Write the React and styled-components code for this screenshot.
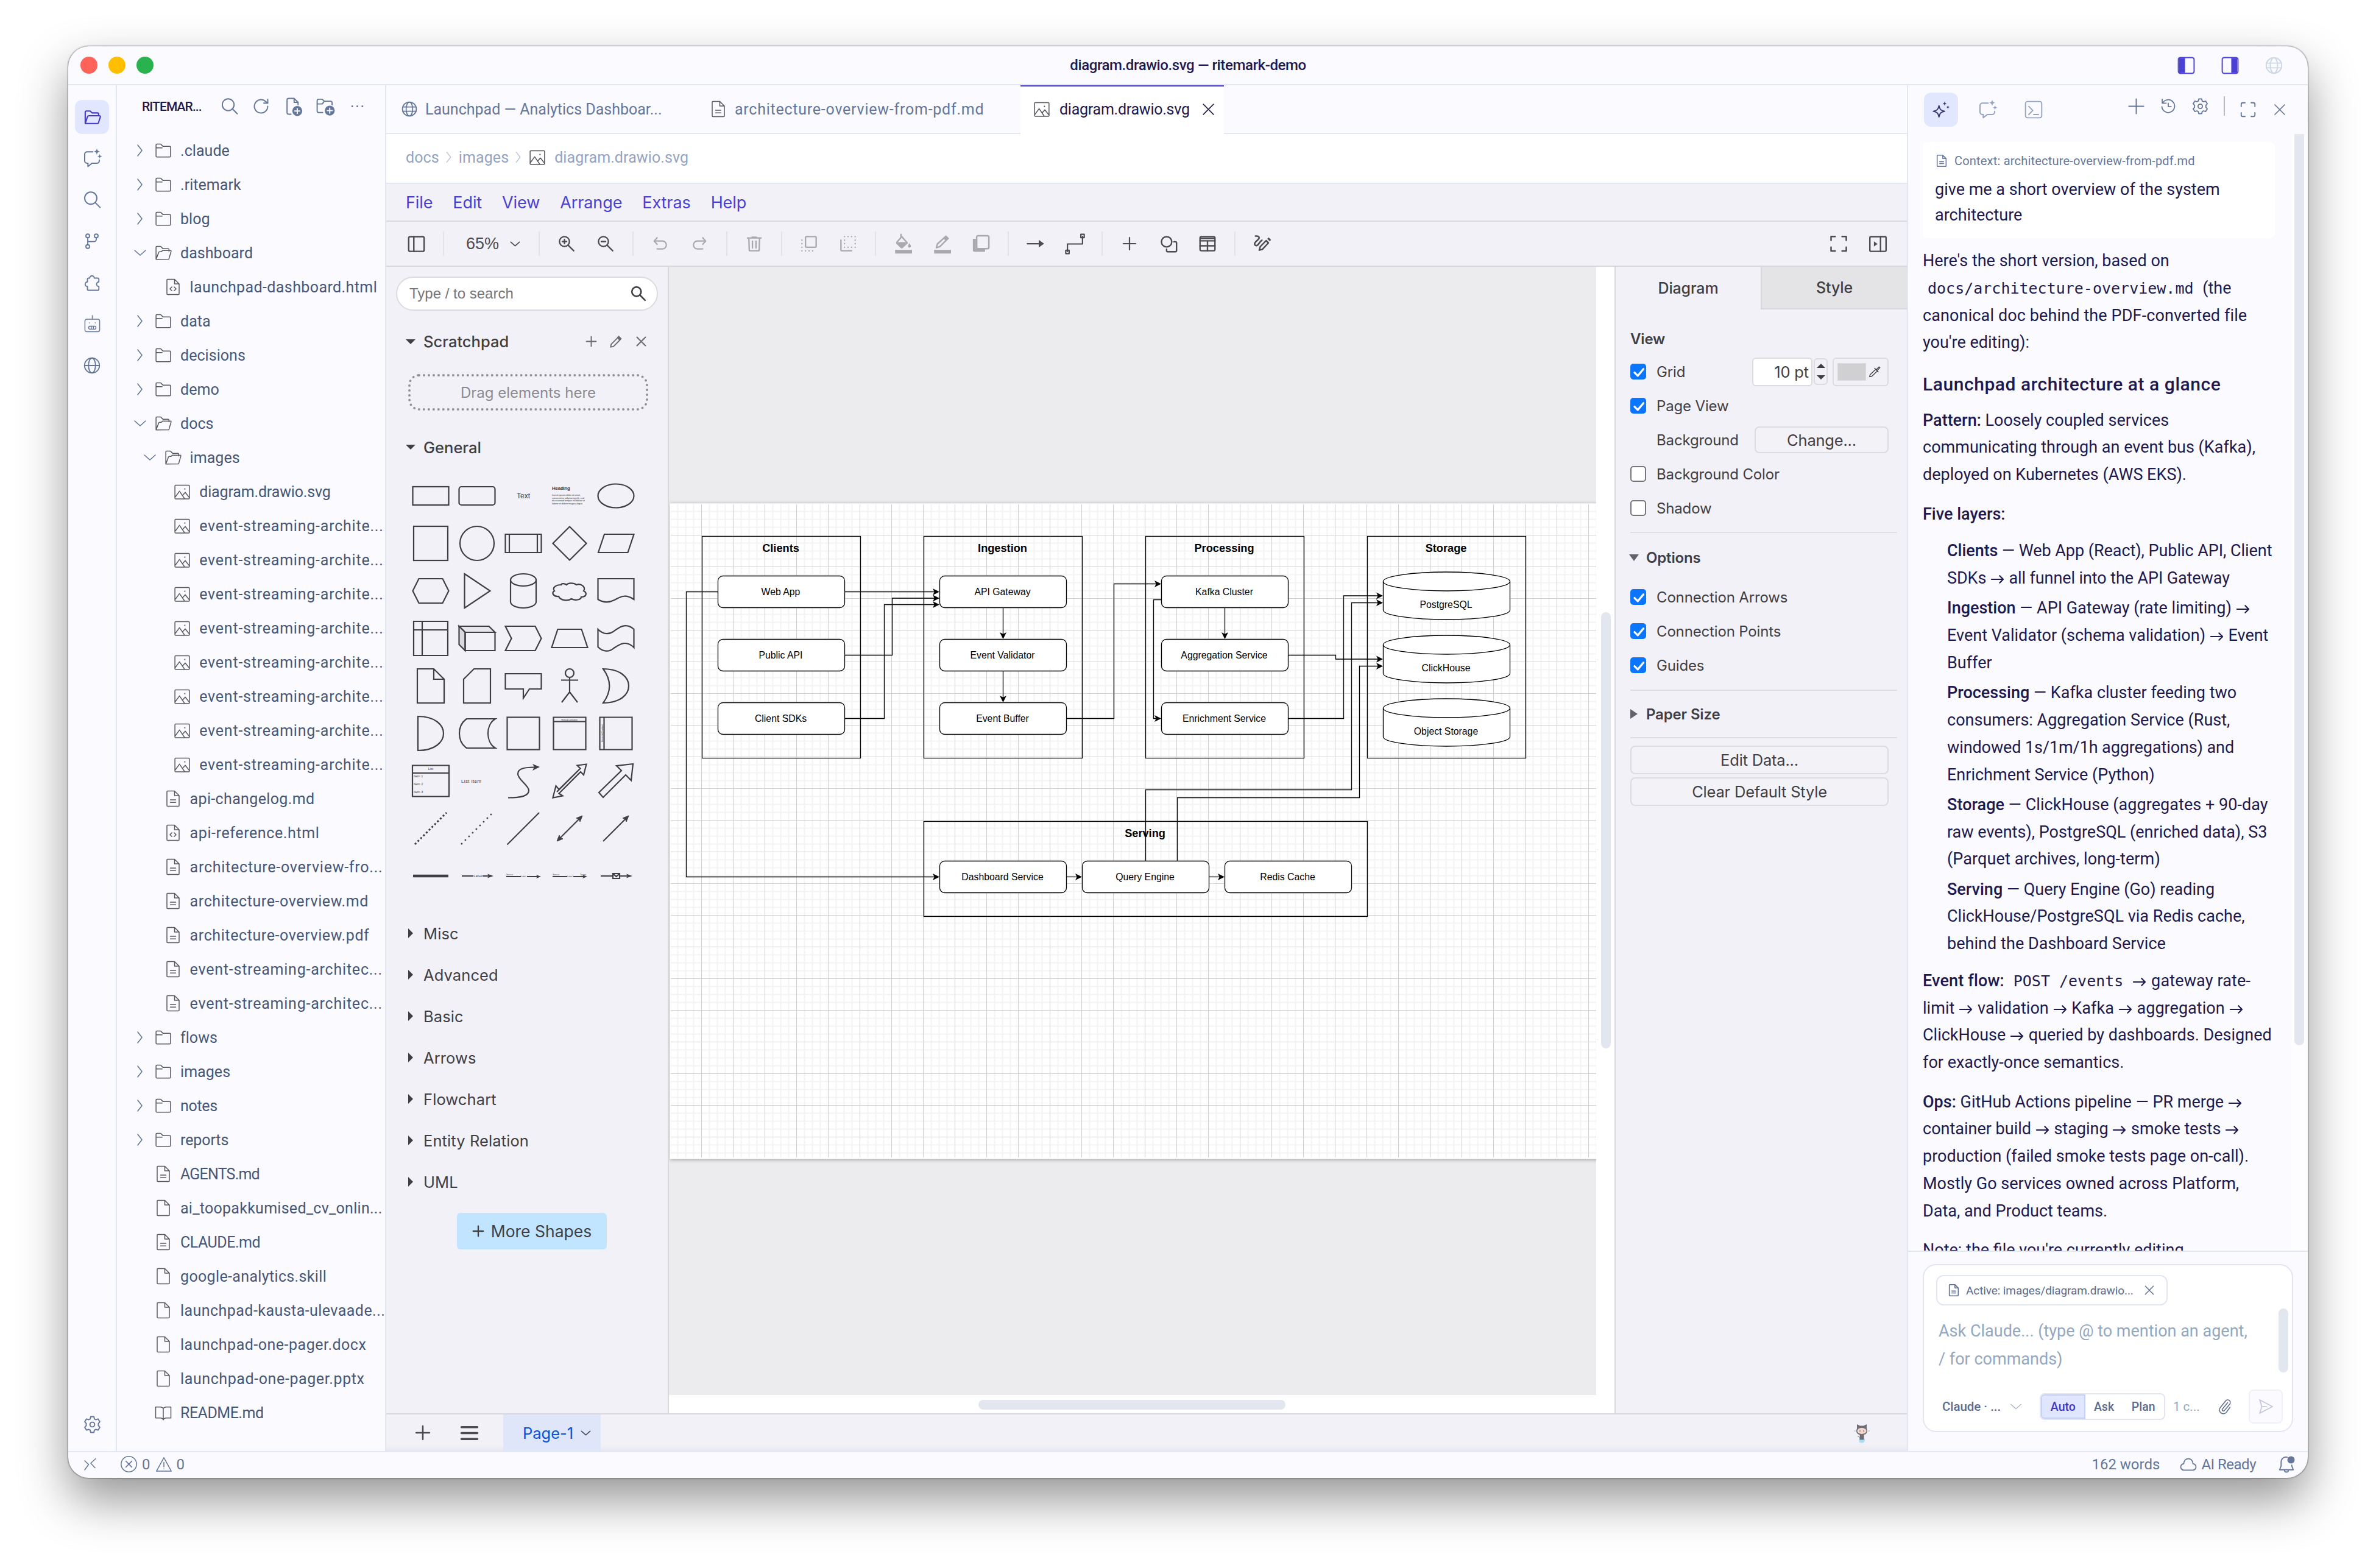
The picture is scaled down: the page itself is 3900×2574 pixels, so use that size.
import React from 'react';
import styled, { createGlobalStyle } from 'styled-components';

const Global = createGlobalStyle`
  * { box-sizing: border-box; }
  html, body { margin: 0; background: #fff; }
  body { font-family: Roboto, "Noto Sans", sans-serif; overflow: hidden; }
`;

/* ---------- icons ---------- */

const Svg = styled.svg`
  width: ${p => p.$s || 28}px;
  height: ${p => p.$s || 28}px;
  flex: none;
  display: block;
  fill: none;
  stroke: ${p => p.$c || 'currentColor'};
  stroke-width: ${p => p.$w || 1.5};
  stroke-linecap: round;
  stroke-linejoin: round;
  overflow: visible;
`;

const fill = { fill: 'currentColor', stroke: 'none' };
const SPARK = 'M0-3.4C.5-1 1-.5 3.4 0 1 .5.5 1 0 3.4-.5 1-1 .5-3.4 0-1-.5-.5-1 0-3.4z';

const glyphs = {
  folderOpen: <path d="M3 20V5.500A1.500 1.500 0 0 1 4.500 4h4.700l2.800 2.500h6.500A1.500 1.500 0 0 1 20 8v2M3 20l2.800-8.500A2 2 0 0 1 7.700 10H21a1.300 1.300 0 0 1 1.200 1.700L19.800 19a1.500 1.500 0 0 1-1.400 1z" />,
  chatSpark: <><path d="M13 4H6a3 3 0 0 0-3 3v8a3 3 0 0 0 3 3h1v4l5-4h6a3 3 0 0 0 3-3v-1" /><path d={SPARK} transform="translate(18 3.500) scale(1.150)" {...fill} /><path d={SPARK} transform="translate(21.500 9.500) scale(.85)" {...fill} /></>,
  search: <><circle cx="10.500" cy="10" r="7.500" /><path d="M16 15.500l6 6" /></>,
  branch: <><circle cx="6" cy="4.500" r="2.600" /><circle cx="18" cy="4.500" r="2.600" /><circle cx="6" cy="19.500" r="2.600" /><path d="M6 7v10M18 7v2.500a3 3 0 0 1-3 3H6" /></>,
  puzzle: <path d="M9 6a3 3 0 1 1 6 0h4.500a1.500 1.500 0 0 1 1.500 1.500V11a3 3 0 1 0 0 6v3.500a1.500 1.500 0 0 1-1.500 1.500h-12A1.500 1.500 0 0 1 6 20.500V17a3 3 0 1 1 0-6V7.500A1.500 1.500 0 0 1 7.500 6z" />,
  robot: <><rect x="2" y="5" width="20" height="17" rx="2.500" /><path d="M12 0v5M9 14.500h6a2 2 0 0 1 0 4H9a2 2 0 0 1 0-4zM10.500 14.500v4M13.500 14.500v4M8 10h.1M16 10h.1" /></>,
  globe: <><circle cx="12" cy="12" r="9.800" /><ellipse cx="12" cy="12" rx="4.600" ry="9.800" /><path d="M2.500 9h19M2.500 15h19" /></>,
  globeMid: <><circle cx="12" cy="12" r="9.800" /><ellipse cx="12" cy="12" rx="4.600" ry="9.800" /><path d="M2.200 12h19.600" /></>,
  gear: <><path d="M10 2h4l.7 2.900 1.800.9L19.300 4.900l2.300 3.600-1.900 2.200v2.600l1.900 2.200-2.300 3.600-2.800-.9-1.800.9L14 22h-4l-.7-2.900-1.800-.9-2.800.9-2.300-3.600 1.900-2.200v-2.600L2.400 8.500l2.300-3.600 2.800.9 1.800-.9z" /><circle cx="12" cy="12" r="3" /></>,
  refresh: <><path d="M20.500 12a8.500 8.500 0 1 1-2.700-6.200L20.500 8" /><path d="M20.500 3v5h-5" /></>,
  newFile: <><path d="M9 22H6a2 2 0 0 1-2-2V4a2 2 0 0 1 2-2h7l5 5v3M13 2v5h5" /><circle cx="17" cy="18" r="6.300" {...fill} /><path d="M17 14.800v6.400M13.800 18h6.400" stroke="#fafaff" /></>,
  newFolder: <><path d="M9 20H4a2 2 0 0 1-2-2V5a2 2 0 0 1 2-2h4.500L11 5.500h8a2 2 0 0 1 2 2V10M2 9h6.500L11 5.500" /><circle cx="18" cy="17.500" r="6.300" {...fill} /><path d="M18 14.300v6.400M14.800 17.500h6.400" stroke="#fafaff" /></>,
  dots: <><circle cx="4" cy="12" r="1.400" {...fill} /><circle cx="12" cy="12" r="1.400" {...fill} /><circle cx="20" cy="12" r="1.400" {...fill} /></>,
  right: <path d="M8 3l7 9-7 9" />,
  down: <path d="M3 8l9 8 9-8" />,
  folder: <path d="M2.500 8.500V4.500a1 1 0 0 1 1-1h5l3 3h9a1 1 0 0 1 1 1v12a1 1 0 0 1-1 1h-17a1 1 0 0 1-1-1v-11h8" />,
  folderOpenThin: <path d="M2.500 20V4.500a1 1 0 0 1 1-1h5l3 3h7a1 1 0 0 1 1 1V10M2.500 20.500L6 11.500a1.500 1.500 0 0 1 1.300-1h2.200l1.500-1.500h10.500a.8.800 0 0 1 .8 1l-2.800 9.700a1 1 0 0 1-1 .8z" />,
  file: <path d="M14 2H5a1 1 0 0 0-1 1v18a1 1 0 0 0 1 1h14a1 1 0 0 0 1-1V8zv6h6" />,
  fileText: <><path d="M14 2H5a1 1 0 0 0-1 1v18a1 1 0 0 0 1 1h14a1 1 0 0 0 1-1V8zv6h6" /><path d="M8.500 13.500h7M8.500 17h7" /></>,
  fileCode: <><path d="M14 2H5a1 1 0 0 0-1 1v18a1 1 0 0 0 1 1h14a1 1 0 0 0 1-1V8zv6h6" /><path d="M10.500 12l-2.500 2.500 2.500 2.500M13.500 12l2.500 2.500-2.500 2.500" /></>,
  image: <><rect x="2.500" y="3.500" width="19" height="18" rx="1" /><path d="M3 19l5.500-7.500L15 21M12.500 17l3.500-4 5.500 7" /><circle cx="15.500" cy="8.500" r=".9" {...fill} /></>,
  book: <path d="M12 6.500C11 5 9.500 4.500 8 4.500H2v14.500h6c2 0 3.500.8 4 2.500.5-1.700 2-2.500 4-2.500h6V4.500h-6c-1.500 0-3 .5-4 2zV21" />,
  close: <path d="M4 4l16 16M20 4L4 20" />,
  plus: <path d="M12 2v20M2 12h20" />,
  panelLeft: <><rect x="2" y="2" width="20" height="20" rx="2.500" /><path d="M3 2.500h7.500v19H3z" {...fill} /></>,
  panelRight: <><rect x="2" y="2" width="20" height="20" rx="2.500" /><path d="M13.500 2.500H21v19h-7.500z" {...fill} /></>,
  sparkle: <><path d="M9.500 7c1 4.800 2 5.800 7 7-5 1.200-6 2.200-7 7-1-4.800-2-5.800-7-7 5-1.200 6-2.200 7-7z" /><path d={SPARK} transform="translate(16.500 4.500) scale(.85)" {...fill} /><path d={SPARK} transform="translate(20.500 9) scale(.65)" {...fill} /></>,
  terminal: <><rect x="2" y="2" width="20" height="20" rx="2.500" /><path d="M6 8l5 5-5 5M12 18h6" /></>,
  history: <><path d="M4 8a9 9 0 1 1-1 5M3.500 2.500V8H9" /><path d="M12 8v5h4" /></>,
  expand: <path d="M3 8V5a2 2 0 0 1 2-2h3M16 3h3a2 2 0 0 1 2 2v3M21 16v3a2 2 0 0 1-2 2h-3M8 21H5a2 2 0 0 1-2-2v-3" />,
  clip: <path d="M16.500 5.500L8 16a2 2 0 0 0 3.200 2.500L20 8a4.300 4.300 0 0 0-6.800-5.300L4.500 13.500a6.300 6.300 0 0 0 9.800 8L20.500 13" />,
  send: <path d="M3.500 2.500L21.500 12 3.500 21.500 6.500 12zM6.500 12H13" />,
  cloud: <path d="M6 20a4.500 4.500 0 0 1-.5-9C6 6.500 8.500 4 12 4s6 2.500 6.500 7a4.500 4.500 0 0 1-.5 9z" />,
  bell: <><path d="M13 2.500C8 1.500 5 5 5 9v5l-2 5h18l-2-5v-1" /><path d="M9.500 19.500a2.500 2.500 0 0 0 5 0" /><circle cx="18" cy="6" r="4.800" {...fill} /></>,
  remote: <path d="M3 6l6.500 6L3 21M21 2.500L13 10l7 7.500" />,
  error: <><circle cx="12" cy="12" r="10.500" /><path d="M8 8l8 8M16 8l-8 8" /></>,
  warn: <path d="M12 2.500L1.500 21.500h21zM12 9v6.500M12 18.200v.1" />,
  tick: <path d="M6 12.500l4.500 4.500L18.500 7.500" stroke="#fff" strokeWidth="2.800" />,
  /* diagram editor toolbar */
  find: <><circle cx="9" cy="9" r="7" /><path d="M14.500 14.500L22 22" /></>,
  tbPanel: <><rect x="1.500" y="2" width="21" height="20" rx="2" /><path d="M8.500 2v20" /></>,
  zoomIn: <><circle cx="9" cy="9" r="7" /><path d="M14.500 14.500L22 22M9 6v6M6 9h6" /></>,
  zoomOut: <><circle cx="9" cy="9" r="7" /><path d="M14.500 14.500L22 22M6 9h6" /></>,
  undo: <path d="M7 3L2.500 8 7 13M3 8h12a6 6 0 0 1 0 12H7" />,
  redo: <path d="M17 3l4.500 5L17 13M21 8H9a6 6 0 0 0 0 12h8" />,
  trash: <path d="M2.500 4h19M9 3h6M4.500 5l.5 15.500A1.500 1.500 0 0 0 6.500 22h11a1.500 1.500 0 0 0 1.500-1.500L19.500 5M9.500 8.500V18M14.500 8.500V18" />,
  toFront: <><rect x="7" y="2" width="15" height="15" rx="1.500" /><path d="M2 7v.1M2 12v.1M2 17v.1M2 22v.1M7 22v.1M12 22v.1M17 22v.1" /></>,
  toBack: <><path d="M2 7v13.500A1.500 1.500 0 0 0 3.500 22H17" /><path d="M7 2v.1M12 2v.1M17 2v.1M22 2v.1M22 7v.1M22 12v.1M22 17v.1M17 17v.1M12 17v.1M7 17v.1M7 12v.1M7 7v.1" /></>,
  fillTool: <><path d="M9 -1v4M10 2L3.500 9.500a1.500 1.500 0 0 0 0 1.500l5.500 5.500a1.500 1.500 0 0 0 2 0l6.500-6z" /><path d="M3.500 9.500h13L10 17z" {...fill} /><path d="M20.500 11c1.200 2 2 3 2 4a2 2 0 0 1-4 0c0-1 .8-2 2-4z" {...fill} /><path d="M1 20h23v5H1z" {...fill} /></>,
  lineTool: <><path d="M4 17l1.500-5L17 1.500l3 3L9 15.500z" /><path d="M13.500 4.500L17 .5l4 4-3.500 3.500z" {...fill} /><path d="M1 20h23v5H1z" {...fill} /></>,
  shadowTool: <><path d="M1.500 5.500h4v13h12v4h-14a2 2 0 0 1-2-2z" {...fill} /><rect x="6.500" y="1.500" width="16" height="17" rx="2" /></>,
  arrowTool: <><path d="M1 12h16" /><path d="M16 7l7 5-7 5z" {...fill} /></>,
  connectorTool: <><path d="M3 21V12H21V3" /><path d="M1 19.500h4v4H1zM19 .5h4v4h-4z" /></>,
  shapesTool: <><circle cx="9" cy="9" r="7" /><path d="M19 9h2a1.500 1.500 0 0 1 1.500 1.500V21a1.500 1.500 0 0 1-1.500 1.500H10.500A1.500 1.500 0 0 1 9 21v-2" /></>,
  tableTool: <><rect x="1.500" y="2" width="21" height="20" rx="2" /><path d="M1.500 8h21M1.500 15h21M12 8v14" /><path d="M2 4.500h20" /></>,
  freehand: <><path d="M3 2c4.500-.5 6.500 2 3 5s-6 6-2.500 7.500c3.500 1 4-5 8-7" /><path d="M8 20.500l1.200-4.500L17 8l3 3-8 8.500z" /><path d="M18.500 5.500l1.800-1.700 3.200 3.200-1.800 1.700z" {...fill} /></>,
  fullscreen: <path d="M2 7.500V2.500h5.500M16.500 2.500H22v5M22 16.500v5h-5.500M7.500 21.500H2v-5" />,
  tbFormat: <><rect x="1" y="2" width="22" height="20" rx="1.500" /><path d="M15.500 2v20" /><path d="M6.500 8.500l5 3.500-5 3.500z" {...fill} /></>,
  pencil: <><path d="M2.500 21.500l1-5L15 5l4 4L7.500 20.500z" /><path d="M14 4l3-3 5.500 5.500-3 3z" {...fill} /></>,
  dropper: <path d="M3 21l1-3.500L14 8l3 3L7 20.500zM12 6l6.500 6.500M15.500 8L20 3.500l1.500 1.500L17 9.500z" />,
  menu: <path d="M2 4.500h20M2 12h20M2 19.500h20" />,
};

const Icon = ({ n, s, c, w }) => (
  <Svg viewBox="0 0 24 24" $s={s} $c={c} $w={w}>{glyphs[n]}</Svg>
);

/* ---------- window frame ---------- */

const Desktop = styled.div`
  width: 3900px;
  height: 2574px;
  padding: 76px 112px 148px;
  background: #fff;
`;
const Window = styled.div`
  width: 3676px;
  height: 2350px;
  border-radius: 34px;
  overflow: hidden;
  display: flex;
  flex-direction: column;
  background: #fafaff;
  color: #64779a;
  box-shadow: 0 0 2px 1px rgba(0,0,0,.38), 0 36px 80px rgba(0,0,0,.42);
`;
const TitleBar = styled.header`
  height: 64px;
  flex: none;
  border-bottom: 2px solid #e2e8f2;
  display: grid;
  grid-template-columns: 1fr auto 1fr;
  align-items: center;
`;
const Lights = styled.div`
  display: flex;
  gap: 18px;
  padding-left: 20px;
`;
const Light = styled.i`
  width: 28px;
  height: 28px;
  border-radius: 50%;
  background: ${p => p.$c};
`;
const WindowTitle = styled.div`
  font-size: 24px;
  font-weight: 500;
  letter-spacing: -.4px;
  color: #1e1a4f;
`;
const TitleIcons = styled.div`
  display: flex;
  justify-content: flex-end;
  gap: 41px;
  padding-right: 40px;
  color: #4a40d4;
`;
const Body = styled.div`
  flex: 1;
  min-height: 0;
  display: flex;
`;

/* ---------- activity bar ---------- */

const Activity = styled.nav`
  width: 80px;
  flex: none;
  border-right: 2px solid #e2e8f2;
  padding: 24px 0 16px;
  display: flex;
  flex-direction: column;
  align-items: center;
  gap: 12px;
`;
const ActivityItem = styled.div`
  width: 56px;
  height: 56px;
  border-radius: 12px;
  display: grid;
  place-items: center;
  background: ${p => (p.$on ? '#e0e7ff' : 'transparent')};
  color: ${p => (p.$on ? '#4338ca' : '#64779a')};
  ${p => p.$end && 'margin-top: auto;'}
`;

/* ---------- explorer ---------- */

const Explorer = styled.aside`
  width: 442px;
  flex: none;
  border-right: 2px solid #e2e8f2;
  overflow: hidden;
`;
const ExplorerHead = styled.div`
  height: 79px;
  padding: 0 0 10px 41px;
  display: flex;
  align-items: center;
`;
const ExplorerTitle = styled.div`
  width: 117px;
  flex: none;
  font-size: 21px;
  font-weight: 500;
  letter-spacing: -.9px;
  color: #1e1a4f;
`;
const HeadIcon = styled.div`
  width: 52.500px;
  display: grid;
  place-items: center;
`;
const TreeRow = styled.div`
  height: 56px;
  display: flex;
  align-items: center;
  padding-left: ${p => 24 + p.$d * 15.6}px;
  white-space: nowrap;
  font-size: 25px;
  letter-spacing: ${p => p.$ls}px;
  color: #475777;
`;
const Twist = styled.span`
  width: 28px;
  height: 24px;
  flex: none;
  display: grid;
  place-items: center;
  color: #5d7294;
`;
const FileIcon = styled.span`
  width: 48px;
  flex: none;
  padding-left: 9px;
  color: #585a62;
  margin-right: 4px;
`;

const tree = [
  [0, 'r', 'folder', '.claude'], [0, 'r', 'folder', '.ritemark'], [0, 'r', 'folder', 'blog'],
  [0, 'd', 'folderOpenThin', 'dashboard'], [1, '', 'fileCode', 'launchpad-dashboard.html', .4],
  [0, 'r', 'folder', 'data'], [0, 'r', 'folder', 'decisions'], [0, 'r', 'folder', 'demo'],
  [0, 'd', 'folderOpenThin', 'docs'], [1, 'd', 'folderOpenThin', 'images'],
  [2, '', 'image', 'diagram.drawio.svg', -.15],
  ...Array.from({ length: 8 }, () => [2, '', 'image', 'event-streaming-archite...', .78]),
  [1, '', 'fileText', 'api-changelog.md', .35], [1, '', 'fileCode', 'api-reference.html', .6],
  [1, '', 'fileText', 'architecture-overview-fro...', .75], [1, '', 'fileText', 'architecture-overview.md', .6],
  [1, '', 'fileText', 'architecture-overview.pdf', .6], [1, '', 'fileText', 'event-streaming-architec...', .78],
  [1, '', 'fileText', 'event-streaming-architec...', .78],
  [0, 'r', 'folder', 'flows'], [0, 'r', 'folder', 'images'], [0, 'r', 'folder', 'notes', -.3], [0, 'r', 'folder', 'reports', -.1],
  [0, '', 'fileText', 'AGENTS.md', -.8], [0, '', 'file', 'ai_toopakkumised_cv_onlin...', .27],
  [0, '', 'fileText', 'CLAUDE.md', -.5], [0, '', 'file', 'google-analytics.skill', .35],
  [0, '', 'file', 'launchpad-kausta-ulevaade...', .45], [0, '', 'file', 'launchpad-one-pager.docx', .5],
  [0, '', 'file', 'launchpad-one-pager.pptx', .6], [0, '', 'book', 'README.md', -.5],
];

/* ---------- editor ---------- */

const Editor = styled.main`
  width: 2496px;
  flex: none;
  display: flex;
  flex-direction: column;
`;
const Tabs = styled.div`
  height: 80px;
  flex: none;
  display: flex;
`;
const Tab = styled.div`
  width: ${p => p.$w}px;
  padding: 0 0 2px ${p => p.$l}px;
  display: flex;
  align-items: center;
  gap: ${p => p.$g || 12}px;
  white-space: nowrap;
  font-size: 25px;
  letter-spacing: ${p => p.$ls || 0}px;
  color: ${p => (p.$on ? '#1e1a4f' : '#64779a')};
  background: ${p => (p.$on ? '#fff' : 'transparent')};
  border-top: 2px solid ${p => (p.$on ? '#4a40d4' : 'transparent')};
  border-bottom: 2px solid ${p => (p.$on ? '#fff' : '#e2e8f2')};
`;
const TabClose = styled.span`
  margin-left: 4px;
`;
const TabFill = styled.div`
  flex: 1;
  border-bottom: 2px solid #e2e8f2;
`;
const FileTint = styled.span`
  display: flex;
  color: #55565c;
`;
const Crumbs = styled.div`
  height: 82px;
  flex: none;
  background: #fff;
  border-bottom: 2px solid #e2e8f2;
  display: flex;
  align-items: center;
  padding: 0 0 4px 32px;
  gap: 5px;
  font-size: 25px;
  letter-spacing: .1px;
  color: #94a3bf;
  ${FileTint} { margin-right: 8px; }
`;
const MenuBar = styled.div`
  height: 62px;
  flex: none;
  background: #f2f1f7;
  border-bottom: 2px solid #d9d8de;
  display: flex;
  align-items: center;
  gap: 33px;
  padding-left: 32px;
  font: 27px Inter, sans-serif;
  letter-spacing: -.1px;
  color: #4a40d4;
`;
const Toolbar = styled.div`
  height: 74px;
  flex: none;
  background: #f2f1f7;
  border-bottom: 2px solid #d9d8de;
  display: flex;
  align-items: center;
  padding: 0 16px 0 17px;
  color: #4c4b51;
`;
const Tool = styled.div`
  width: 64px;
  display: grid;
  place-items: center;
  color: ${p => (p.$off ? '#a9a8ad' : '#4c4b51')};
`;
const Sep = styled.div`
  width: 2px;
  height: 40px;
  margin: 0 12px;
  background: #e3e2e8;
`;
const ZoomBox = styled.div`
  width: 131px;
  padding-left: 24px;
  display: flex;
  align-items: center;
  gap: 17px;
  font: 27px "Liberation Sans", sans-serif;
`;
const Grow = styled.div`
  flex: 1;
`;
const Work = styled.div`
  height: 1882px;
  flex: none;
  display: flex;
  background: #f2f1f7;
`;

/* ---------- shape library ---------- */

const Library = styled.div`
  width: 464px;
  flex: none;
  border-right: 2px solid #d9d8de;
  font-family: Inter, sans-serif;
  color: #3f3e44;
  display: flex;
  flex-direction: column;
`;
const SearchField = styled.div`
  width: 430px;
  height: 56px;
  margin: 16px 0 0 16px;
  padding: 0 17px 0 20px;
  border: 2px solid #dcdbe1;
  border-radius: 28px;
  background: #fff;
  display: flex;
  align-items: center;
  justify-content: space-between;
  font: 24px "Liberation Sans", sans-serif;
  color: #76757a;
`;
const Section = styled.div`
  height: ${p => p.$h || 68}px;
  display: flex;
  align-items: center;
  padding-left: 30px;
  font-size: 25.500px;
  font-weight: ${p => (p.$open ? 500 : 400)};
  letter-spacing: ${p => (p.$open ? 0 : .1)}px;
`;
const Caret = styled.i`
  width: 31px;
  &::before {
    content: "";
    display: block;
    width: 0;
    height: 0;
    margin-left: ${p => (p.$open ? 2 : 6)}px;
    border: solid transparent;
    border-width: ${p => (p.$open ? '8px 8px 0' : '8px 0 8px 8px')};
    border-${p => (p.$open ? 'top' : 'left')}-color: #3f3e44;
  }
`;
const SectionTools = styled.div`
  margin-left: auto;
  margin-right: 33px;
  display: flex;
  align-items: center;
  gap: 20px;
  color: #6b6a70;
`;
const DropZone = styled.div`
  width: 394px;
  height: 60px;
  margin: 3px 0 26px 36px;
  border: 4px dotted #919096;
  border-radius: 18px;
  display: grid;
  place-items: center;
  font-size: 24px;
  color: #8b8a90;
`;
const ShapeGrid = styled.div`
  margin: 7px 0 21px 35px;
  display: grid;
  grid-template-columns: repeat(5, 76px);
  grid-auto-rows: 78px;
`;
const ShapeSvg = styled.svg`
  width: 76px;
  height: 78px;
  fill: none;
  stroke: #3f3e44;
  stroke-width: 2.200;
  text { fill: #3f3e44; stroke: none; font-family: "Liberation Sans", sans-serif; }
`;
const MoreShapes = styled.button`
  width: 246px;
  height: 60px;
  margin: 17px 0 0 116px;
  border: 0;
  border-radius: 6px;
  background: #c2e5ff;
  color: #3f3e44;
  font: 26.500px Inter, sans-serif;
  display: flex;
  align-items: center;
  justify-content: center;
  gap: 11px;
`;

const solid = { fill: '#3f3e44' };
const shapes = [
  <rect x="-29.500" y="-15" width="59" height="30" />,
  <rect x="-29.500" y="-15" width="59" height="30" rx="4" />,
  <text x="0" y="4" fontSize="12" textAnchor="middle">Text</text>,
  <><text x="-29" y="-10" fontSize="8" fontWeight="700" textLength="30">Heading</text>
    <text x="-29" y="0" fontSize="4.200" textLength="47">Lorem ipsum dolor sit amet,</text>
    <text x="-29" y="4.700" fontSize="4.200" textLength="53">consectetur adipisicing elit, sed</text>
    <text x="-29" y="9.400" fontSize="4.200" textLength="54">do eiusmod tempor incididunt ut</text>
    <text x="-29" y="13.500" fontSize="4.200" textLength="51">labore et dolore magna aliqua.</text></>,
  <ellipse rx="29.500" ry="19.500" />,
  <rect x="-28" y="-28" width="56" height="56" />,
  <circle r="28" />,
  <path d="M-29.500-15h59v30h-59zM-23-15v30M23-15v30" />,
  <path d="M0-27.500L27.500 0 0 27.500-27.500 0z" />,
  <path d="M-19-15h48.500l-10 30h-48.500z" />,
  <path d="M-29.500 0l10-20h39l10 20-10 20h-39z" />,
  <path d="M-20.500-28v56L21.500 0z" />,
  <path d="M-21-18a21 10 0 0 1 42 0v36a21 10 0 0 1-42 0zM-21-18a21 10 0 0 0 42 0" />,
  <path d="M-14-10c-9 0-15 5-11 10-6 3-1 10 7 9 3 7 15 8 21 4 7 4 16 1 16-3 9 0 10-7 4-10 4-6-4-13-12-10-5-4-14-3-16 0-4-3-9-2-9 0z" />,
  <path d="M-29.500-20h59v34c-16-11-25-2-32 1-10 5-19 4-27-1z" />,
  <path d="M-28-28h56v56h-56zM-14-28v56M-28-14h56" />,
  <><path d="M-29.500-20h49l10 10h-49z" fill="#e6e5ea" /><path d="M-29.500-20l10 10v30l-10-10z" fill="#dad9df" /><path d="M-19.500-10h49v30h-49z" /></>,
  <path d="M-29.500-20h49l10 20-10 20h-49l10-20z" />,
  <path d="M-19.500-15h39l10 30h-59z" />,
  <path d="M-29.500-15c8 8 17 9 25 4 9-7 21-16 34-4v30c-13-13-24-5-33 1-8 7-18 6-26-2z" />,
  <path d="M-22-28H5l17 17v39h-44zM5-28v17h17" />,
  <path d="M-5-28h27v56h-44v-39z" />,
  <path d="M-29.500-20h59v25H10L0 20V5h-29.500z" />,
  <path d="M0-14V10M-14-9.500h28M0 10l-13 17M0 10l13 17M0-14a7 7 0 1 0 0-14 7 7 0 0 0 0 14" />,
  <path d="M-21-28c56 0 56 56 0 56 14-19 14-37 0-56z" />,
  <path d="M-21-28c56 0 56 56 0 56z" />,
  <path d="M-17-24h47c-16 10-16 38 0 48h-47c-16-11-16-37 0-48z" />,
  <rect x="-26.500" y="-26.500" width="53" height="53" />,
  <><path d="M-26.500-26.500h53v53h-53zM-26.500-19.500h53" /><text x="-14" y="-21.500" fontSize="4" textLength="27">Vertical Container</text></>,
  <><path d="M-26.500-26.500h53v53h-53zM-19.500-26.500v53" /><text transform="translate(-21.500 14) rotate(-90)" fontSize="4" textLength="29">Horizontal Container</text></>,
  <><path d="M-30-25.500h60v51h-60zM-30-13h60" /><text x="0" y="-18" fontSize="5.500" textAnchor="middle">List</text>
    <text x="-28" y="-6" fontSize="5.500">Item 1</text><text x="-28" y="7" fontSize="5.500">Item 2</text><text x="-28" y="20" fontSize="5.500">Item 3</text></>,
  <text x="-26" y="3" fontSize="8" textLength="33">List Item</text>,
  <><path d="M-25 27.500c22 0 34-3 34-12 0-8-18-18-18-27 0-8 8-11 28-11" /><path d="M27-23l-12-5 3 5-3 6z" {...solid} stroke="none" /></>,
  <path d="M27.500-27.500l-15 2 5 5L-17.500 14l-5-6-5 19.500 16-3-6-4L18-15l5 5zM-21 18L14-17" />,
  <path d="M28-28l-27 3 8 8-37 36 7 8 37-37 9 9z" />,
  <path d="M-26 26L26-26" strokeDasharray="3 3.500" strokeWidth="3" />,
  <path d="M-26 26L26-26" strokeDasharray="2.500 6" strokeWidth="2.500" />,
  <path d="M-26.500 26.500L26-26" />,
  <><path d="M-18 18L18-18" /><path d="M21-21l-10 4 4.500 1.500 1.500 4.500zM-21 21l10-4-4.500-1.500-1.500-4.500z" {...solid} strokeWidth="1" /></>,
  <><path d="M-21 21L18-18" /><path d="M21-21l-10 4 4.500 1.500 1.500 4.500z" {...solid} strokeWidth="1" /></>,
  <path d="M-29 0h58" strokeWidth="4.500" />,
  <><path d="M-25 0h19M9 0h12" /><path d="M27 0l-10-3.500 2.500 3.500-2.500 3.500z" {...solid} stroke="none" /><text x="-5.500" y="2" fontSize="5.500">Label</text></>,
  <><path d="M-28 1h12M-4 1h-12M6 1h18" /><path d="M29 1l-8-3 2 3-2 3z" {...solid} stroke="none" /><text x="-28" y="-1" fontSize="3.500">Source</text><text x="-4" y="2" fontSize="3.500">Label</text></>,
  <><path d="M-28 1h24M6 1h20" /><path d="M29 1l-8-3 2 3-2 3z" {...solid} stroke="none" /><text x="-28" y="-1" fontSize="3.500">Source</text><text x="-4" y="2" fontSize="3.500">Label</text><text x="17" y="-1" fontSize="3.500">Target</text></>,
  <><path d="M-25 0h20M7 0h13" /><path d="M27 0l-10-3.500 2.500 3.500-2.500 3.500z" {...solid} stroke="none" /><path d="M-5-4h11v8H-5zM-5-4L.5 1 6-4" /></>,
];

/* ---------- canvas ---------- */

const CanvasArea = styled.div`
  width: 1552px;
  flex: none;
  display: grid;
  grid-template: 1852px 30px / 1522px 30px;
  background: #fff;
`;
const CanvasSvg = styled.svg`
  display: block;
  width: 1522px;
  height: 1852px;
  text { font-family: "Liberation Sans", Arial, sans-serif; text-anchor: middle; fill: #000; }
`;
const VThumb = styled.div`
  width: 16px;
  height: 716px;
  margin: 567px 0 0 8px;
  border-radius: 8px;
  background: #e2e6ef;
`;
const HThumb = styled.div`
  width: 504px;
  height: 16px;
  margin: 8px 0 0 508px;
  border-radius: 8px;
  background: #e2e6ef;
`;

const Group = ({ x, y = 880.5, w = 260, h = 364, t }) => (
  <g>
    <rect x={x} y={y} width={w} height={h} fill="none" stroke="#000" strokeWidth="1.300" />
    <text x={x + w / 2 - 1} y={y + 25.5} fontSize="18.200" fontWeight="700">{t}</text>
  </g>
);
const Node = ({ x, y, t }) => (
  <g>
    <rect x={x} y={y} width="208" height="52" rx="8" fill="#fff" stroke="#000" strokeWidth="1.300" />
    <text x={x + 103} y={y + 31} fontSize="15.800">{t}</text>
  </g>
);
const Store = ({ y, t }) => (
  <g>
    <path d={`M2270.500 ${y + 15.5}a104 15.500 0 0 1 208 0v47a104 15.500 0 0 1-208 0z`} fill="#fff" stroke="#000" strokeWidth="1.300" />
    <path d={`M2270.500 ${y + 15.5}a104 15.500 0 0 0 208 0`} fill="none" stroke="#000" strokeWidth="1.300" />
    <text x="2373.500" y={y + 58.5} fontSize="15.800">{t}</text>
  </g>
);
const edges = [
  'M1386.500 971.500H1536', 'M1386.500 1075.500H1464.500V982H1536', 'M1386.500 1179.500H1451.500V992.500H1536',
  'M1178.500 971.500H1126.500V1439.500H1536', 'M1646.500 997.500V1043', 'M1646.500 1101.500V1147',
  'M1750.500 1179.500H1828.500V958.500H1900', 'M1906.500 984.500H1893.500V1179.500H1900', 'M2010.500 997.500V1043',
  'M2114.500 1075.500H2192.500V1082H2264', 'M2114.500 1179.500H2205.500V978H2264',
  'M1880.500 1413.500V1296.500H2218.500V989.500H2264', 'M1932.500 1413.500V1309.500H2231.500V1093.500H2264',
  'M1750.500 1439.500H1770', 'M1984.500 1439.500H2004',
];
const heads = [
  [1542, 971.5], [1542, 982], [1542, 992.5], [1542, 1439.5], [1646.5, 1049, 90], [1646.5, 1153, 90], [1906, 958.5],
  [1906, 1179.5], [2010.5, 1049, 90], [2270, 1082], [2270, 978], [2270, 989.5], [2270, 1093.5], [1776, 1439.5], [2010, 1439.5],
];

const Diagram = () => (
  <CanvasSvg viewBox="1098 438 1522 1852">
    <defs>
      <pattern id="grid" x="1151" y="878" width="52" height="52" patternUnits="userSpaceOnUse">
        <path d="M13.500 0v52M26.500 0v52M39.500 0v52M0 13.500h52M0 26.500h52M0 39.500h52" stroke="#f4f4f4" strokeWidth="2" />
        <path d="M.5 0v52M0 .5h52" stroke="#d0d0d0" strokeWidth="1.200" />
      </pattern>
      <filter id="pageShadow" x="-2%" y="-2%" width="104%" height="104%">
        <feDropShadow dx="0" dy="1" stdDeviation="3" floodColor="#000" floodOpacity=".35" />
      </filter>
    </defs>
    <rect x="1098" y="438" width="1522" height="1852" fill="#ecebed" />
    <rect x="1099.500" y="826.500" width="1560" height="1076" fill="#fff" filter="url(#pageShadow)" />
    <rect x="1101" y="828" width="1560" height="1072" fill="url(#grid)" />
    <Group x={1152.5} t="Clients" />
    <Group x={1516.5} t="Ingestion" />
    <Group x={1880.5} t="Processing" />
    <Group x={2244.5} t="Storage" />
    <Group x={1516.5} y={1348.5} w={728} h={156} t="Serving" />
    <Node x={1178.5} y={945.5} t="Web App" />
    <Node x={1178.5} y={1049.5} t="Public API" />
    <Node x={1178.5} y={1153.5} t="Client SDKs" />
    <Node x={1542.5} y={945.5} t="API Gateway" />
    <Node x={1542.5} y={1049.5} t="Event Validator" />
    <Node x={1542.5} y={1153.5} t="Event Buffer" />
    <Node x={1906.5} y={945.5} t="Kafka Cluster" />
    <Node x={1906.5} y={1049.5} t="Aggregation Service" />
    <Node x={1906.5} y={1153.5} t="Enrichment Service" />
    <Store y={939} t="PostgreSQL" />
    <Store y={1043} t="ClickHouse" />
    <Store y={1147} t="Object Storage" />
    <Node x={1542.5} y={1413.5} t="Dashboard Service" />
    <Node x={1776.5} y={1413.5} t="Query Engine" />
    <Node x={2010.5} y={1413.5} t="Redis Cache" />
    {edges.map(d => <path key={d} d={d} fill="none" stroke="#000" strokeWidth="1.300" />)}
    {heads.map(([x, y, r = 0]) => (
      <path key={`${x}-${y}`} d="M0 0L-11-5.500-8.300 0-11 5.500z" transform={`translate(${x} ${y}) rotate(${r})`} />
    ))}
  </CanvasSvg>
);

/* ---------- format panel ---------- */

const Format = styled.div`
  flex: 1;
  border-left: 2px solid #d9d8de;
  font-family: Inter, sans-serif;
  font-size: 24px;
  letter-spacing: -.15px;
  color: #3f3e44;
`;
const FormatTabs = styled.div`
  height: 70px;
  display: grid;
  grid-template-columns: 238px 1fr;
`;
const FormatTab = styled.div`
  display: grid;
  place-items: center;
  font-size: 25px;
  font-weight: 500;
  background: ${p => (p.$dim ? '#e4e3e6' : 'transparent')};
  border: solid #d9d8de;
  border-width: ${p => (p.$dim ? '0 0 2px 2px' : 0)};
`;
const FormatGroup = styled.div`
  margin: 0 16px 0 24px;
  padding: ${p => p.$p};
  border-bottom: 2px solid #dfdee4;
`;
const FormatTitle = styled.div`
  height: ${p => p.$h || 52}px;
  display: flex;
  align-items: center;
  font-weight: 600;
`;
const SmallCaret = styled(Caret)`
  width: 26px;
  &::before { margin-left: ${p => (p.$open ? -2 : 0)}px; border-${p => (p.$open ? 'top' : 'left')}-color: #63626a; border-width: ${p => (p.$open ? '11px 8px 0' : '8px 0 8px 12px')}; }
`;
const FormatRow = styled.div`
  height: 56px;
  padding-right: 14px;
  display: flex;
  align-items: center;
`;
const Box = styled.span`
  width: 26px;
  height: 26px;
  margin-right: 17px;
  border-radius: 5px;
  display: grid;
  place-items: center;
  background: ${p => (p.$on ? '#0a75ff' : '#fff')};
  border: ${p => (p.$on ? 0 : '2px solid #76757b')};
`;
const Indent = styled.span`
  width: 43px;
`;
const Field = styled.div`
  width: 99px;
  height: 47px;
  margin-left: auto;
  padding-right: 4px;
  border: 2px solid #dcdbe1;
  border-radius: 6px;
  background: #fff;
  display: flex;
  align-items: center;
  justify-content: flex-end;
  font-size: 25.500px;
`;
const Stepper = styled.div`
  width: 23px;
  height: 44px;
  margin: 0 8px 0 2px;
  border: 2px solid #dcdbe1;
  border-radius: 6px;
  display: flex;
  flex-direction: column;
  align-items: center;
  justify-content: center;
  gap: 12px;
  &::before, &::after { content: ""; border: 7px solid transparent; }
  &::before { border-top: 0; border-bottom-color: #3f3e44; }
  &::after { border-bottom: 0; border-top-color: #3f3e44; }
`;
const ColorField = styled.div`
  width: 92px;
  height: 47px;
  padding: 0 10px 0 6px;
  border: 2px solid #dcdbe1;
  border-radius: 6px;
  display: flex;
  align-items: center;
  justify-content: space-between;
`;
const Swatch = styled.i`
  width: 47px;
  height: 29px;
  background: #d0d0d2;
  border: 1px solid #dcdbe0;
`;
const PlainButton = styled.button`
  width: ${p => p.$w}px;
  height: ${p => p.$h || 47}px;
  margin: ${p => p.$m};
  border: 2px solid #dcdbe1;
  border-radius: 8px;
  background: #f3f2f7;
  color: #3f3e44;
  font: 25.500px Inter, sans-serif;
  letter-spacing: -.2px;
  padding: 0;
  display: block;
`;
const Check = ({ on }) => <Box $on={on}>{on && <Icon n="tick" />}</Box>;

const PageBar = styled.div`
  height: 62px;
  flex: none;
  border-top: 2px solid #d9d8de;
  background: #f2f1f7;
  display: flex;
  align-items: center;
  padding: 0 57px 0 47px;
  color: #4c4b51;
  box-shadow: inset 0 -10px 12px -8px rgba(60,60,90,.08);
`;
const PageTab = styled.div`
  width: 160px;
  height: 60px;
  margin-left: 40px;
  padding-left: 32px;
  display: flex;
  align-items: center;
  gap: 11px;
  background: #e0e6fa;
  color: #0a53d8;
  font: 25.500px Inter, sans-serif;
`;
const BarGap = styled.div`
  width: 48px;
`;
const CatSvg = styled.svg`
  width: 34px;
  height: 34px;
`;

/* ---------- assistant ---------- */

const Chat = styled.aside`
  flex: 1;
  border-left: 2px solid #e2e8f2;
  display: flex;
  flex-direction: column;
  color: #1e1a4f;
`;
const ChatHead = styled.div`
  height: 80px;
  flex: none;
  padding: 0 34px 0 26px;
  display: flex;
  align-items: center;
  color: #64779a;
`;
const ChatTab = styled.div`
  width: 56px;
  height: 56px;
  margin-right: 20px;
  border-radius: 12px;
  display: grid;
  place-items: center;
  background: ${p => (p.$on ? '#e0e7ff' : 'transparent')};
  color: ${p => (p.$on ? '#3b3472' : '#94a3bf')};
`;
const ChatTools = styled.div`
  margin: 0 23px 12px auto;
  padding-right: 24px;
  height: 32px;
  display: flex;
  align-items: center;
  gap: 24px;
  border-right: 2px solid #b9bac4;
`;
const ChatEnd = styled.div`
  display: flex;
  gap: 25px;
  align-items: center;
`;
const ChatScroll = styled.div`
  height: 1835px;
  flex: none;
  overflow: hidden;
  display: flex;
  justify-content: space-between;
  border-bottom: 2px solid #e2e8f2;
`;
const Messages = styled.div`
  width: 602px;
  padding: 13px 0 0 24px;
  white-space: nowrap;
  font-size: 27px;
`;
const ChatRail = styled.div`
  width: 28px;
  background: #fdfdff;
  padding: 0 6px;
`;
const ChatThumb = styled.div`
  height: 1496px;
  border-radius: 0 0 8px 8px;
  background: #e2e6ef;
`;
const UserCard = styled.div`
  width: 578px;
  height: 158px;
  padding: 10px 20px;
  margin-bottom: 15px;
  border-radius: 8px;
  background: #fff;
  line-height: 42px;
`;
const Context = styled.div`
  height: 42px;
  display: flex;
  align-items: center;
  gap: 10px;
  margin-bottom: 5px;
  font-size: 20px;
  letter-spacing: .2px;
  color: #64779a;
`;
const Para = styled.div`
  margin-bottom: ${p => (p.$mb === undefined ? 19.5 : p.$mb)}px;
  padding-left: ${p => (p.$in ? 40 : 0)}px;
  line-height: 44.800px;
  b { font-weight: 500; }
`;
const Heading = styled.div`
  font-size: 30px;
  font-weight: 500;
  letter-spacing: .55px;
  line-height: 50px;
  margin-bottom: 12px;
`;
const Line = styled.div`
  height: 44.800px;
  letter-spacing: ${p => p.$ls || 0}px;
`;
const Code = styled.code`
  font: 25px "DejaVu Sans Mono", monospace;
  letter-spacing: 0;
  padding: 0 8px;
`;
const Arr = styled(Svg)`
  display: inline-block;
  width: 23px;
  height: 24px;
  margin: 0 1px 0 0;
  vertical-align: -4px;
  stroke-width: 2.200;
`;
const A = () => <Arr viewBox="0 0 24 24"><path d="M2 13h20M16 7l6 6-6 6" /></Arr>;

const Composer = styled.div`
  width: 608px;
  height: 276px;
  margin: 20px 0 0 24px;
  border: 2px solid #e2e6f3;
  border-radius: 22px;
  background: #fff;
  padding: 16px 6px 0 20px;
`;
const Chip = styled.div`
  width: 380px;
  height: 50px;
  border: 2px solid #e2e6f3;
  border-radius: 12px;
  display: flex;
  align-items: center;
  padding: 0 18px 0 16px;
  gap: 9px;
  font-size: 19px;
  letter-spacing: -.1px;
  color: #5b6c8f;
  svg:last-child { margin-left: auto; }
`;
const Prompt = styled.div`
  height: 138px;
  display: flex;
  justify-content: space-between;
  padding: 5px 0 0 4px;
`;
const Placeholder = styled.div`
  padding-top: 15px;
  font-size: 27px;
  line-height: 45.500px;
  white-space: pre;
  color: #94a7c0;
`;
const PromptThumb = styled.div`
  width: 16px;
  height: 105px;
  border-radius: 8px;
  background: #e2e6ef;
`;
const Controls = styled.div`
  height: 56px;
  padding: 0 9px 0 10px;
  display: flex;
  align-items: center;
  font-size: 20.500px;
  white-space: nowrap;
  color: #5b6c8f;
`;
const Model = styled.div`
  width: 160px;
  display: flex;
  align-items: center;
  gap: 14px;
  font-weight: 500;
  letter-spacing: -.05px;
`;
const Segments = styled.div`
  width: 206px;
  height: 44px;
  border: 2px solid #e2e6f3;
  border-radius: 8px;
  display: flex;
  font-weight: 500;
  font-size: 19.500px;
`;
const Segment = styled.div`
  width: ${p => p.$w}px;
  display: grid;
  place-items: center;
  background: ${p => (p.$on ? '#e0e6ff' : 'transparent')};
  color: ${p => (p.$on ? '#4036c4' : '#5b6c8f')};
  border: ${p => (p.$on ? '2px solid #c4d1fb' : 0)};
  border-radius: ${p => (p.$on ? '6px 0 0 6px' : 0)};
`;
const Cost = styled.div`
  width: 68px;
  padding-left: 13px;
  color: #94a7c0;
`;
const Send = styled.div`
  width: 56px;
  height: 56px;
  margin-left: 27px;
  border: 2px solid #f0f0f8;
  border-radius: 8px;
  background: #fafaff;
  display: grid;
  place-items: center;
  color: #c3c7dc;
`;

/* ---------- status bar ---------- */

const Status = styled.footer`
  height: 44px;
  flex: none;
  border-top: 2px solid #e2e8f2;
  display: flex;
  align-items: center;
  padding: 0 20px 3px 24px;
  font-size: 24px;
  white-space: nowrap;
`;
const StatusItem = styled.div`
  display: flex;
  align-items: center;
  gap: ${p => p.$g || 7}px;
  margin-right: ${p => p.$mr || 0}px;
  letter-spacing: ${p => p.$ls || 0}px;
`;

export default function App() {
  return (
    <Desktop>
      <Global />
      <Window>
        <TitleBar>
          <Lights><Light $c="#ff6259" /><Light $c="#ffbf00" /><Light $c="#28b34f" /></Lights>
          <WindowTitle>diagram.drawio.svg — ritemark-demo</WindowTitle>
          <TitleIcons>
            <Icon n="panelLeft" s={31} /><Icon n="panelRight" s={31} /><Icon n="globe" s={31} c="#cdd7e6" />
          </TitleIcons>
        </TitleBar>

        <Body>
          <Activity>
            <ActivityItem $on><Icon n="folderOpen" s={31} w={1.6} /></ActivityItem>
            <ActivityItem><Icon n="chatSpark" s={32} /></ActivityItem>
            <ActivityItem><Icon n="search" s={32} /></ActivityItem>
            <ActivityItem><Icon n="branch" s={28} w={1.6} /></ActivityItem>
            <ActivityItem><Icon n="puzzle" s={30} /></ActivityItem>
            <ActivityItem><Icon n="robot" s={29} w={1.2} /></ActivityItem>
            <ActivityItem><Icon n="globeMid" s={30} /></ActivityItem>
            <ActivityItem $end><Icon n="gear" s={31} /></ActivityItem>
          </Activity>

          <Explorer>
            <ExplorerHead>
              <ExplorerTitle>RITEMAR...</ExplorerTitle>
              {['search', 'refresh', 'newFile', 'newFolder', 'dots'].map(n => (
                <HeadIcon key={n}><Icon n={n} s={n === 'dots' ? 25 : 31} /></HeadIcon>
              ))}
            </ExplorerHead>
            {tree.map(([d, t, icon, name, ls = 0.05], i) => (
              <TreeRow key={i} $d={d} $ls={ls}>
                <Twist>{t && <Icon n={t === 'r' ? 'right' : 'down'} s={24} />}</Twist>
                <FileIcon><Icon n={icon} s={30} w={1.2} /></FileIcon>
                {name}
              </TreeRow>
            ))}
          </Explorer>

          <Editor>
            <Tabs>
              <Tab $w={510} $l={24}><Icon n="globe" s={28} />Launchpad — Analytics Dashboar...</Tab>
              <Tab $w={531} $l={20} $ls={.76}><FileTint><Icon n="fileText" s={30} w={1.2} /></FileTint>architecture-overview-from-pdf.md</Tab>
              <Tab $on $w={334} $l={20} $g={14} $ls={-.25}><FileTint><Icon n="image" s={30} w={1.2} /></FileTint>diagram.drawio.svg<TabClose><Icon n="close" s={25} /></TabClose></Tab>
              <TabFill />
            </Tabs>
            <Crumbs>
              docs<Icon n="right" s={22} c="#b9c4d8" />images<Icon n="right" s={22} c="#b9c4d8" />
              <FileTint><Icon n="image" s={30} w={1.2} /></FileTint>diagram.drawio.svg
            </Crumbs>
            <MenuBar>
              <span>File</span><span>Edit</span><span>View</span><span>Arrange</span><span>Extras</span><span>Help</span>
            </MenuBar>
            <Toolbar>
              <Tool><Icon n="tbPanel" s={29} w={2} /></Tool>
              <Sep />
              <ZoomBox>65%<Icon n="down" s={19} w={2.2} /></ZoomBox>
              <Sep />
              <Tool><Icon n="zoomIn" s={28} w={2} /></Tool>
              <Tool><Icon n="zoomOut" s={28} w={2} /></Tool>
              <Sep />
              <Tool $off><Icon n="undo" s={26} w={2} /></Tool>
              <Tool $off><Icon n="redo" s={26} w={2} /></Tool>
              <Sep />
              <Tool $off><Icon n="trash" s={28} w={2} /></Tool>
              <Sep />
              <Tool $off><Icon n="toFront" s={28} w={2} /></Tool>
              <Tool $off><Icon n="toBack" s={28} w={2} /></Tool>
              <Sep />
              <Tool $off><Icon n="fillTool" s={29} w={2} /></Tool>
              <Tool $off><Icon n="lineTool" s={29} w={2} /></Tool>
              <Tool $off><Icon n="shadowTool" s={30} w={2} /></Tool>
              <Sep />
              <Tool><Icon n="arrowTool" s={30} w={1.8} /></Tool>
              <Tool><Icon n="connectorTool" s={33} w={1.6} /></Tool>
              <Sep />
              <Tool><Icon n="plus" s={24} w={2.2} /></Tool>
              <Tool><Icon n="shapesTool" s={29} w={2} /></Tool>
              <Tool><Icon n="tableTool" s={28} w={2} /></Tool>
              <Sep />
              <Tool><Icon n="freehand" s={30} w={2} /></Tool>
              <Grow />
              <Tool><Icon n="fullscreen" s={30} w={2} /></Tool>
              <Tool><Icon n="tbFormat" s={29} w={2} /></Tool>
            </Toolbar>

            <Work>
              <Library>
                <SearchField>Type / to search<Icon n="find" s={26} w={2.4} c="#3f3e44" /></SearchField>
                <Section $open $h={101}>
                  <Caret $open />Scratchpad
                  <SectionTools><Icon n="plus" s={19} w={2.4} /><Icon n="pencil" s={22} w={2} /><Icon n="close" s={21} w={2.4} /></SectionTools>
                </Section>
                <DropZone>Drag elements here</DropZone>
                <Section $open><Caret $open />General</Section>
                <ShapeGrid>
                  {shapes.map((s, i) => <ShapeSvg key={i} viewBox="-38 -39 76 78">{s}</ShapeSvg>)}
                </ShapeGrid>
                {['Misc', 'Advanced', 'Basic', 'Arrows', 'Flowchart', 'Entity Relation', 'UML'].map(n => (
                  <Section key={n}><Caret />{n}</Section>
                ))}
                <MoreShapes><Icon n="plus" s={20} w={2.8} />More Shapes</MoreShapes>
              </Library>

              <CanvasArea>
                <Diagram />
                <VThumb />
                <HThumb />
              </CanvasArea>

              <Format>
                <FormatTabs><FormatTab>Diagram</FormatTab><FormatTab $dim>Style</FormatTab></FormatTabs>
                <FormatGroup $p="22px 0 11px">
                  <FormatTitle>View</FormatTitle>
                  <FormatRow>
                    <Check on />Grid
                    <Field>10 pt</Field><Stepper />
                    <ColorField><Swatch /><Icon n="dropper" s={22} /></ColorField>
                  </FormatRow>
                  <FormatRow><Check on />Page View</FormatRow>
                  <FormatRow><Indent />Background<PlainButton $w={220} $h={44} $m="0 0 0 auto">Change...</PlainButton></FormatRow>
                  <FormatRow><Check />Background Color</FormatRow>
                  <FormatRow><Check />Shadow</FormatRow>
                </FormatGroup>
                <FormatGroup $p="3px 0 12px">
                  <FormatTitle $h={74}><SmallCaret $open />Options</FormatTitle>
                  <FormatRow><Check on />Connection Arrows</FormatRow>
                  <FormatRow><Check on />Connection Points</FormatRow>
                  <FormatRow><Check on />Guides</FormatRow>
                </FormatGroup>
                <FormatGroup $p="0">
                  <FormatTitle $h={76}><SmallCaret />Paper Size</FormatTitle>
                </FormatGroup>
                <PlainButton $w={424} $m="12px 0 5px 24px">Edit Data...</PlainButton>
                <PlainButton $w={424} $m="0 0 0 24px">Clear Default Style</PlainButton>
              </Format>
            </Work>

            <PageBar>
              <Icon n="plus" s={26} w={2.4} />
              <BarGap />
              <Icon n="menu" s={31} w={2.8} />
              <PageTab>Page-1<Icon n="down" s={19} w={2} c="#4c4b51" /></PageTab>
              <Grow />
              <CatSvg viewBox="0 0 34 34">
                <circle cx="17" cy="29" r="5" fill="#a9dcf5" />
                <path d="M9 3l5 2.500h6L25 3v7c2 4 1 9-4 10h-8c-5-1-6-6-4-10z" fill="#6f6e76" />
                <ellipse cx="17" cy="14" rx="7.500" ry="5" fill="#f5d9cf" />
                <path d="M14 20h6v8h-6zM13 25l-3-3" fill="#6f6e76" stroke="#6f6e76" />
                <path d="M14 12.500v3M20 12.500v3" stroke="#a08a86" strokeWidth="1.500" />
                <path d="M4 14h3M27 14h3" stroke="#b9b8be" />
              </CatSvg>
            </PageBar>
          </Editor>

          <Chat>
            <ChatHead>
              <ChatTab $on><Icon n="sparkle" s={32} w={1.4} /></ChatTab>
              <ChatTab><Icon n="chatSpark" s={32} /></ChatTab>
              <ChatTab><Icon n="terminal" s={32} w={1.4} /></ChatTab>
              <ChatTools><Icon n="plus" s={29} w={1.6} /><Icon n="history" s={28} /><Icon n="gear" s={29} /></ChatTools>
              <ChatEnd><Icon n="expand" s={30} /><Icon n="close" s={24} w={1.7} /></ChatEnd>
            </ChatHead>

            <ChatScroll>
              <Messages>
                <UserCard>
                  <Context><Icon n="fileText" s={22} w={1.7} />Context: architecture-overview-from-pdf.md</Context>
                  give me a short overview of the system<br />architecture
                </UserCard>
                <Para $mb={20.5}>
                  <Line>Here's the short version, based on</Line>
                  <Line><Code>docs/architecture-overview.md</Code> (the</Line>
                  <Line $ls={.12}>canonical doc behind the PDF-converted file</Line>
                  <Line>you're editing):</Line>
                </Para>
                <Heading>Launchpad architecture at a glance</Heading>
                <Para>
                  <Line><b>Pattern:</b> Loosely coupled services</Line>
                  <Line>communicating through an event bus (Kafka),</Line>
                  <Line>deployed on Kubernetes (AWS EKS).</Line>
                </Para>
                <Para $mb={16}><Line><b>Five layers:</b></Line></Para>
                <Para $in $mb={4.4}>
                  <Line $ls={-.05}><b>Clients</b> — Web App (React), Public API, Client</Line>
                  <Line $ls={-.1}>SDKs <A /> all funnel into the API Gateway</Line>
                </Para>
                <Para $in $mb={4.4}>
                  <Line><b>Ingestion</b> — API Gateway (rate limiting) <A /></Line>
                  <Line>Event Validator (schema validation) <A /> Event</Line>
                  <Line>Buffer</Line>
                </Para>
                <Para $in $mb={4.4}>
                  <Line><b>Processing</b> — Kafka cluster feeding two</Line>
                  <Line>consumers: Aggregation Service (Rust,</Line>
                  <Line $ls={-.1}>windowed 1s/1m/1h aggregations) and</Line>
                  <Line>Enrichment Service (Python)</Line>
                </Para>
                <Para $in $mb={4.4}>
                  <Line $ls={.05}><b>Storage</b> — ClickHouse (aggregates + 90-day</Line>
                  <Line>raw events), PostgreSQL (enriched data), S3</Line>
                  <Line $ls={.1}>(Parquet archives, long-term)</Line>
                </Para>
                <Para $in $mb={16}>
                  <Line><b>Serving</b> — Query Engine (Go) reading</Line>
                  <Line>ClickHouse/PostgreSQL via Redis cache,</Line>
                  <Line $ls={.05}>behind the Dashboard Service</Line>
                </Para>
                <Para>
                  <Line $ls={.15}><b>Event flow:</b> <Code>POST /events</Code> <A /> gateway rate-</Line>
                  <Line $ls={.05}>limit <A /> validation <A /> Kafka <A /> aggregation <A /></Line>
                  <Line>ClickHouse <A /> queried by dashboards. Designed</Line>
                  <Line>for exactly-once semantics.</Line>
                </Para>
                <Para>
                  <Line><b>Ops:</b> GitHub Actions pipeline — PR merge <A /></Line>
                  <Line>container build <A /> staging <A /> smoke tests <A /></Line>
                  <Line>production (failed smoke tests page on-call).</Line>
                  <Line>Mostly Go services owned across Platform,</Line>
                  <Line>Data, and Product teams.</Line>
                </Para>
                <Para><Line>Note: the file you're currently editing</Line></Para>
              </Messages>
              <ChatRail><ChatThumb /></ChatRail>
            </ChatScroll>

            <Composer>
              <Chip><Icon n="fileText" s={22} w={1.7} />Active: images/diagram.drawio...<Icon n="close" s={20} w={1.7} /></Chip>
              <Prompt>
                <Placeholder>{'Ask Claude... (type @ to mention an agent,\n/ for commands)'}</Placeholder>
                <PromptThumb />
              </Prompt>
              <Controls>
                <Model>Claude · ... <Icon n="down" s={22} w={1.3} c="#94a7c0" /></Model>
                <Segments><Segment $on $w={73}>Auto</Segment><Segment $w={62}>Ask</Segment><Segment $w={68}>Plan</Segment></Segments>
                <Cost>1 c...</Cost>
                <Grow />
                <Icon n="clip" s={24} />
                <Send><Icon n="send" s={28} /></Send>
              </Controls>
            </Composer>
          </Chat>
        </Body>

        <Status>
          <StatusItem $mr={37}><Icon n="remote" s={24} /></StatusItem>
          <StatusItem $mr={8}><Icon n="error" s={29} w={1.3} />0</StatusItem>
          <StatusItem><Icon n="warn" s={28} w={1.3} />0</StatusItem>
          <Grow />
          <StatusItem $mr={33}>162 words</StatusItem>
          <StatusItem $mr={35} $ls={-.5}><Icon n="cloud" s={28} />AI Ready</StatusItem>
          <StatusItem><Icon n="bell" s={30} /></StatusItem>
        </Status>
      </Window>
    </Desktop>
  );
}
